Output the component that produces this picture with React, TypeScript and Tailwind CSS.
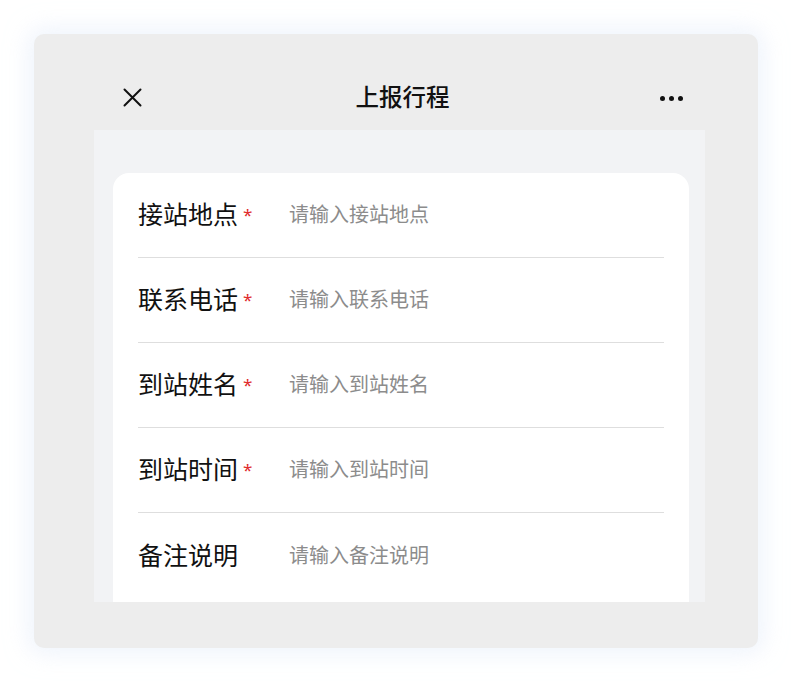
const FONT = { fontFamily: '"Noto Sans", "Noto Sans CJK SC", sans-serif' };

const FIELDS = [
  { label: "接站地点", placeholder: "请输入接站地点", required: true },
  { label: "联系电话", placeholder: "请输入联系电话", required: true },
  { label: "到站姓名", placeholder: "请输入到站姓名", required: true },
  { label: "到站时间", placeholder: "请输入到站时间", required: true },
  { label: "备注说明", placeholder: "请输入备注说明", required: false }
];

export default function App() {
  return (
    <div className="h-[682px] w-[792px] bg-white pl-[34px] pt-[34px]" style={FONT}>
      <div className="h-[614px] w-[724px] rounded-[10px] bg-[#ededed] pl-[60px] pt-[31px] shadow-[0_0_22px_6px_rgba(225,235,250,0.55)]">
        <div className="w-[611px]">
          <header className="relative flex h-[65px] items-center justify-center">
            <svg
              className="absolute left-[29px] top-[23px]"
              width="19"
              height="19"
              viewBox="0 0 19 19"
              fill="none"
              stroke="#111"
              strokeWidth="2"
              strokeLinecap="round"
            >
              <path d="M1.5 1.5l16 16M17.5 1.5l-16 16" />
            </svg>
            <h1 className="ml-[6px] text-[23.5px] font-medium text-[#111]">上报行程</h1>
            <div className="absolute right-[22px] top-[31px] flex gap-[4px]">
              <span className="size-[5px] rounded-full bg-[#111]" />
              <span className="size-[5px] rounded-full bg-[#111]" />
              <span className="size-[5px] rounded-full bg-[#111]" />
            </div>
          </header>

          <div className="h-[472px] overflow-hidden bg-[#f2f3f5] pl-[19px] pr-[16px] pt-[43px]">
            <div className="min-h-[440px] rounded-t-[16px] bg-white px-[25px]">
              {FIELDS.map((field, i) => (
                <div
                  key={field.label}
                  className={`flex h-[85px] items-center ${
                    i < FIELDS.length - 1 ? "border-b border-[#dedede]" : ""
                  }`}
                >
                  <div className="flex w-[151px] items-center">
                    <span className="text-[25px] text-[#111]">{field.label}</span>
                    {field.required && (
                      <span className="ml-[5px] mt-[-2px] text-[17px] leading-none text-[#e02b2b]">*</span>
                    )}
                  </div>
                  <span className="text-[20px] text-[#8c8c8c]">{field.placeholder}</span>
                </div>
              ))}
            </div>
          </div>
        </div>
      </div>
    </div>
  );
}
